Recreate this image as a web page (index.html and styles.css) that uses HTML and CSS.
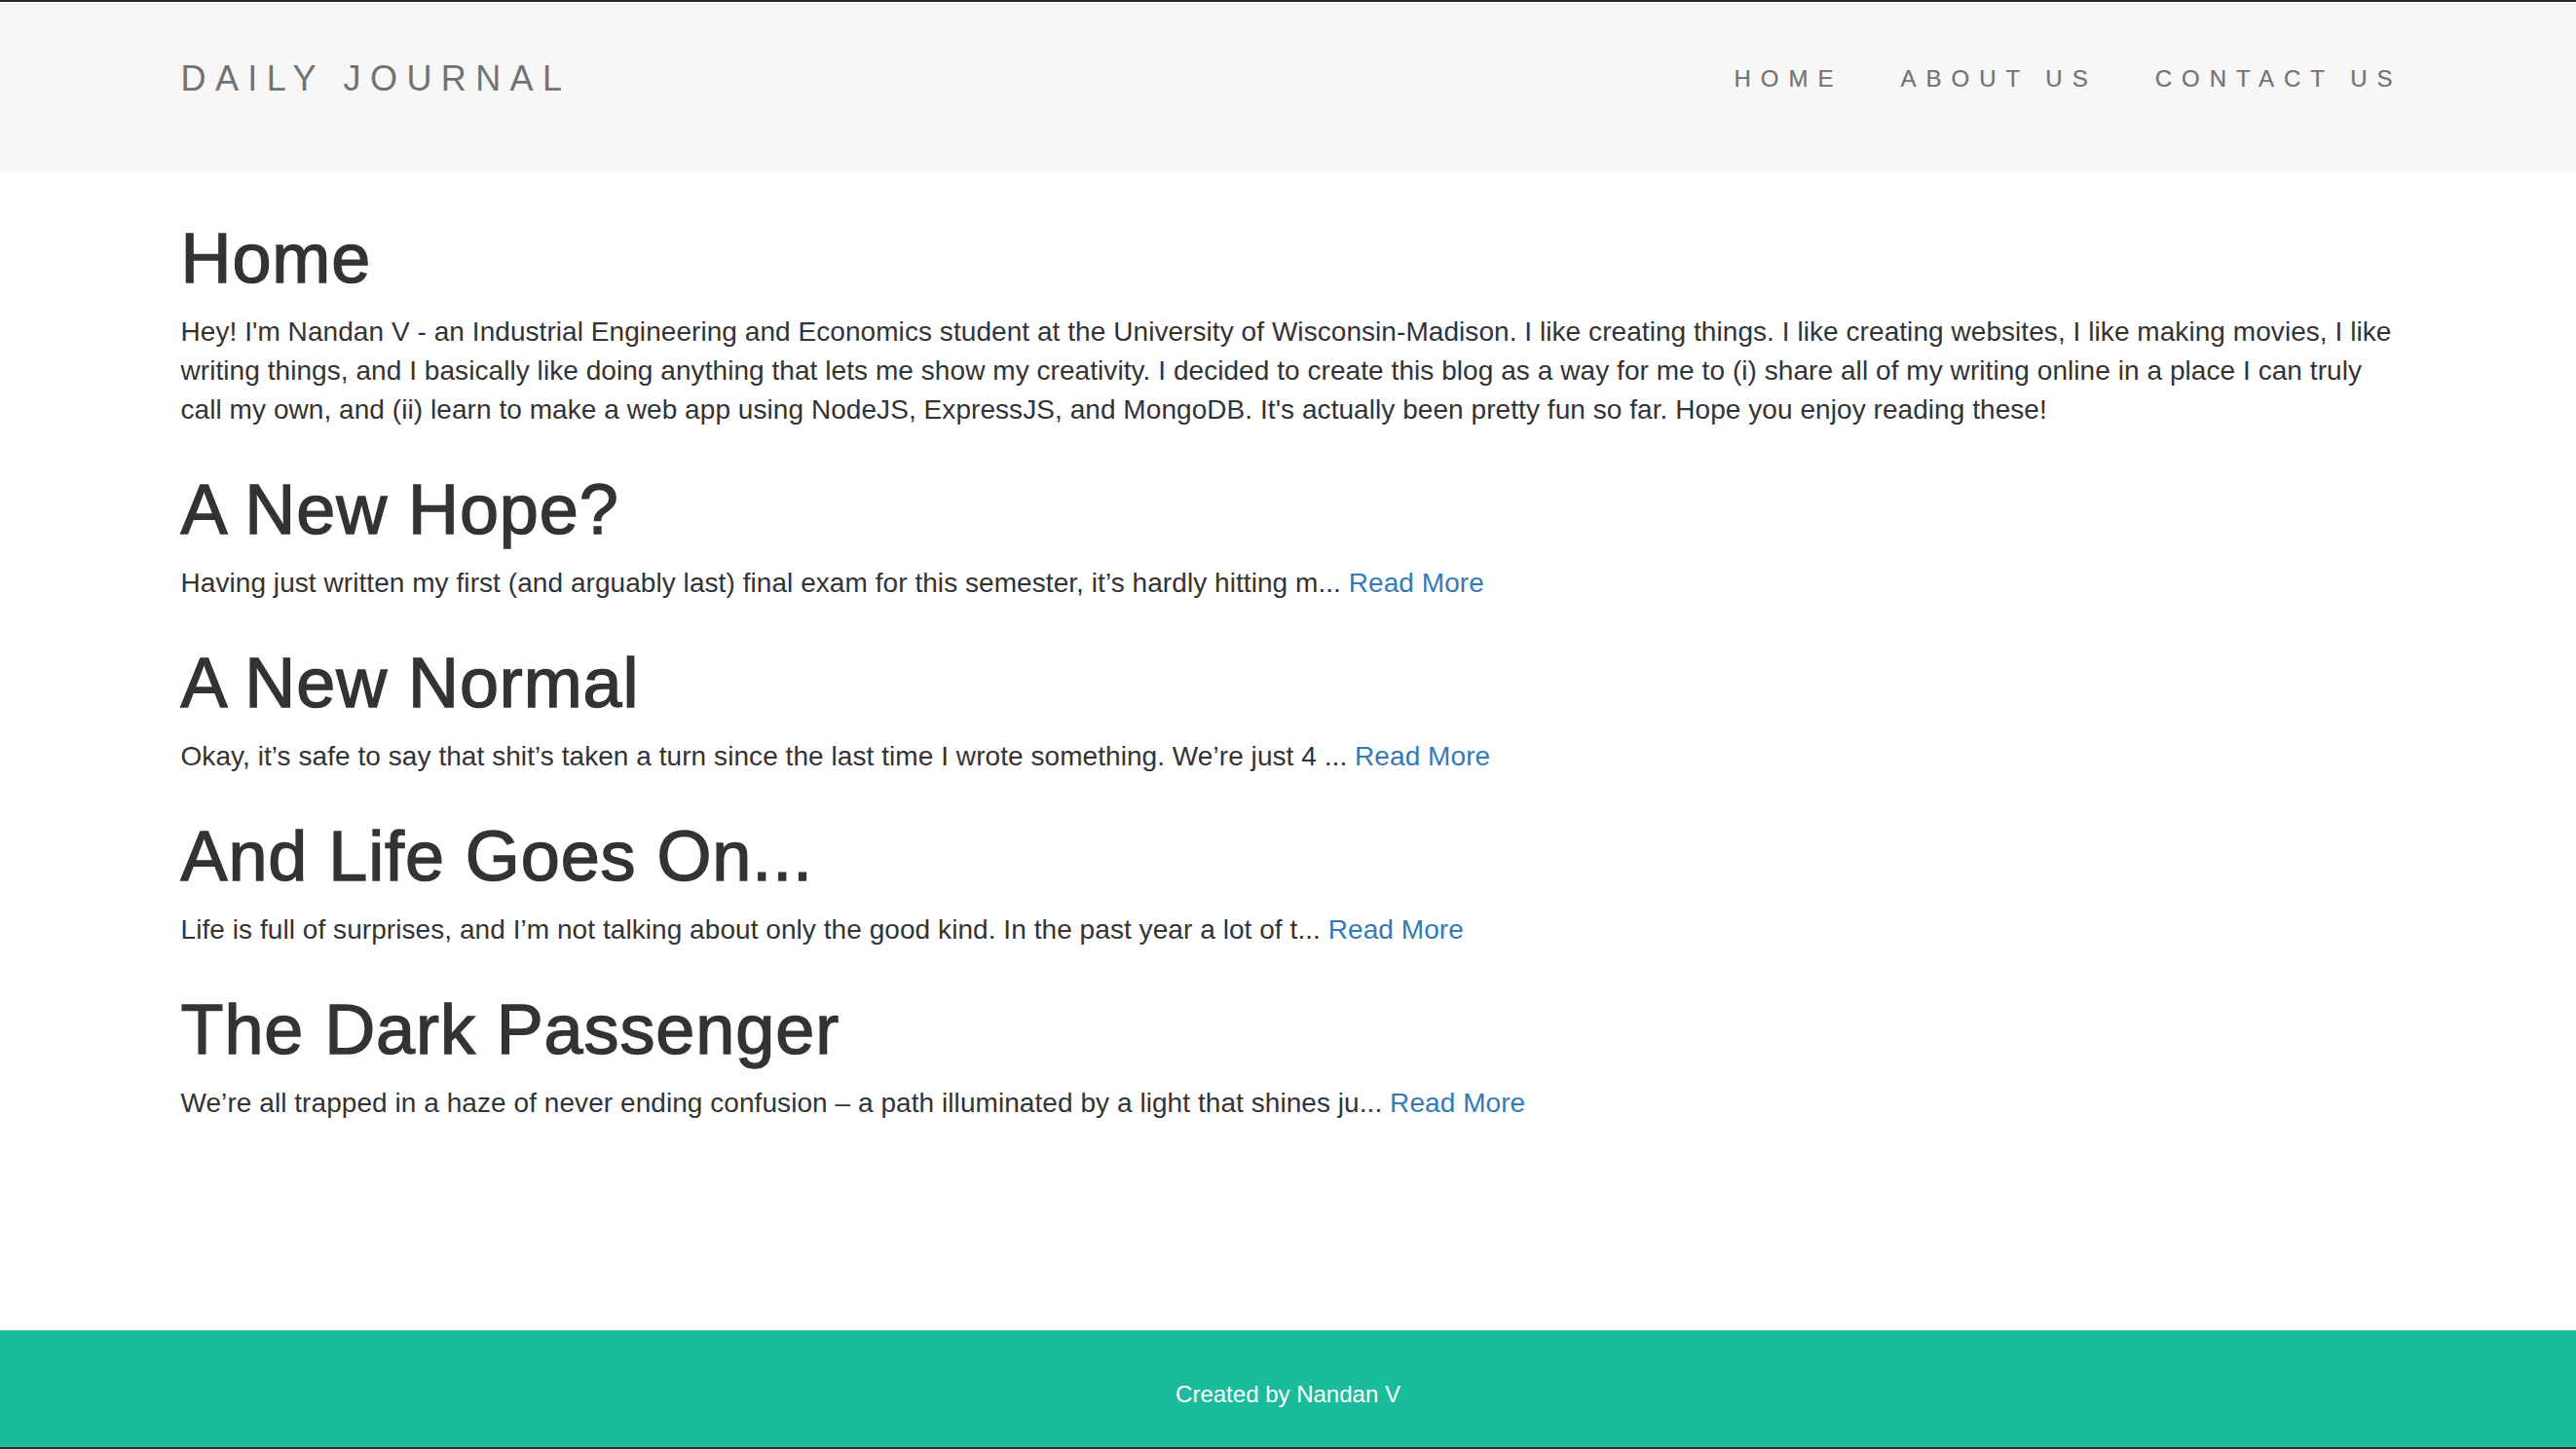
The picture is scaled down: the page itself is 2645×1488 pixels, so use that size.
FILE: index.html
```html
<!DOCTYPE html>
<html lang="en">
<head>
<meta charset="utf-8">
<title>Daily Journal</title>
<link rel="stylesheet" href="styles.css">
</head>
<body>
<div class="chrome-top"></div>
<nav class="navbar">
  <div class="container nav-inner">
    <a class="brand" href="#">DAILY JOURNAL</a>
    <ul class="nav-links">
      <li><a href="#">HOME</a></li>
      <li><a href="#">ABOUT US</a></li>
      <li><a href="#">CONTACT US</a></li>
    </ul>
  </div>
</nav>
<main class="container main">
  <h1 class="title">Home</h1>
  <p class="text">Hey! I'm Nandan V - an Industrial Engineering and Economics student at the University of Wisconsin-Madison. I like creating things. I like creating websites, I like making movies, I like writing things, and I basically like doing anything that lets me show my creativity. I decided to create this blog as a way for me to (i) share all of my writing online in a place I can truly call my own, and (ii) learn to make a web app using NodeJS, ExpressJS, and MongoDB. It's actually been pretty fun so far. Hope you enjoy reading these!</p>

  <h1 class="title">A New Hope?</h1>
  <p class="text">Having just written my first (and arguably last) final exam for this semester, it’s hardly hitting m... <a class="more" href="#">Read More</a></p>

  <h1 class="title">A New Normal</h1>
  <p class="text">Okay, it’s safe to say that shit’s taken a turn since the last time I wrote something. We’re just 4 ... <a class="more" href="#">Read More</a></p>

  <h1 class="title">And Life Goes On...</h1>
  <p class="text">Life is full of surprises, and I’m not talking about only the good kind. In the past year a lot of t... <a class="more" href="#">Read More</a></p>

  <h1 class="title">The Dark Passenger</h1>
  <p class="text">We’re all trapped in a haze of never ending confusion – a path illuminated by a light that shines ju... <a class="more" href="#">Read More</a></p>
</main>
<footer class="footer">
  <p class="footer-text">Created by Nandan V</p>
</footer>
<div class="chrome-bottom"></div>
</body>
</html>
```
FILE: styles.css
```css
html, body {
  margin: 0;
  padding: 0;
}
body {
  font-family: "Liberation Sans", Arial, Helvetica, sans-serif;
  color: #333;
  background: #fff;
  min-height: 100vh;
  display: flex;
  flex-direction: column;
}
.chrome-top {
  height: 2px;
  background: #2a2a2a;
}
.chrome-bottom {
  height: 2px;
  background: #2f2f2f;
}
.container {
  width: 2274px;
  margin: 0 auto;
}
.navbar {
  background: #f7f7f7;
  border-top: 2px solid #fdfdfd;
  box-shadow: inset 0 1px 0 #e7e7e7;
  padding: 57px 0 77px;
}
.nav-inner {
  display: flex;
  justify-content: space-between;
  align-items: flex-start;
}
.brand {
  font-size: 36px;
  line-height: 40px;
  letter-spacing: 9.4px;
  color: #727272;
  text-decoration: none;
}
.nav-links {
  list-style: none;
  margin: 0 -7px 0 0;
  padding: 0;
  display: flex;
  gap: 59px;
}
.nav-links a {
  display: block;
  font-size: 24px;
  line-height: 40px;
  letter-spacing: 10px;
  color: #727272;
  text-decoration: none;
  -webkit-text-stroke: 0.2px #727272;
}
.main {
  flex: 1;
  padding-top: 5px;
}
.title {
  font-size: 72px;
  line-height: 79px;
  font-weight: 500;
  letter-spacing: 0.9px;
  -webkit-text-stroke: 1.4px #333;
  margin: 43px 0 16px;
}
.text {
  font-size: 28px;
  line-height: 40px;
  letter-spacing: 0.06px;
  margin: 0;
}
.more {
  color: #337ab7;
  text-decoration: none;
}
.footer {
  background: #1abc9c;
  height: 120px;
  padding-top: 45px;
  box-sizing: border-box;
  border-top: 1px solid #3fc6ac;
}
.footer-text {
  margin: 0;
  text-align: center;
  color: #fff;
  font-size: 24px;
  line-height: 40px;
}
```
